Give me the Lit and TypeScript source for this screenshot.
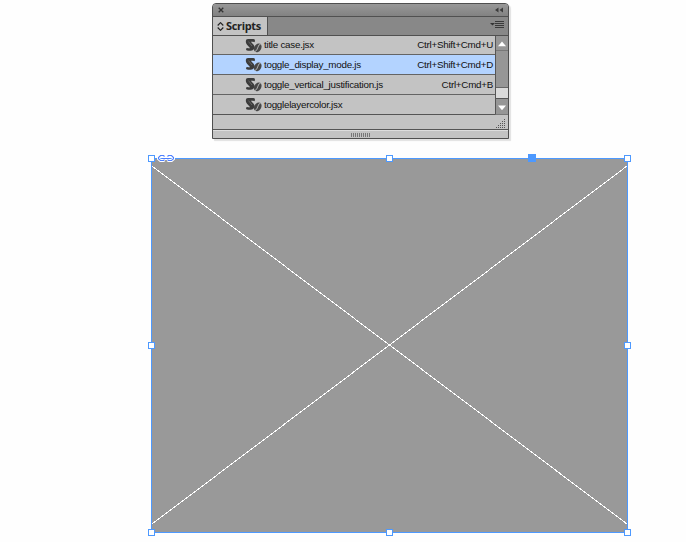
import { LitElement, html, css, svg } from "lit";
import { customElement } from "lit/decorators.js";

interface Script { name: string; keys: string; selected?: boolean; }

const scripts: Script[] = [
  { name: "title case.jsx", keys: "Ctrl+Shift+Cmd+U" },
  { name: "toggle_display_mode.js", keys: "Ctrl+Shift+Cmd+D", selected: true },
  { name: "toggle_vertical_justification.js", keys: "Ctrl+Cmd+B" },
  { name: "togglelayercolor.jsx", keys: "" },
];

const scriptIcon = html`<svg width="17" height="15" viewBox="0 0 17 15">
  <path d="M.8 3Q.8 1 3 1H8.500Q10.200 1.200 10 3T8.200 3.800H5.800L8.800 7Q10.200 9 9 11T5.500 12.800H3Q.8 12.600 1 11.200T3 10.200H5.200L2 6.800Q.6 5 .8 3Z" fill="#3c3c3c"/>
  <path d="M3.500 3.600L7 8" stroke="#777" stroke-width=".7" fill="none"/>
  <g transform="rotate(32 12.700 9.800)"><ellipse cx="12.700" cy="9.800" rx="3.500" ry="4.700" fill="#484848"/>
  <path d="M13.100 5Q11.900 7.500 12.700 9.800T12.400 14.600" stroke="#b4b4b4" stroke-width=".9" fill="none"/></g>
</svg>`;

@customElement("scripts-panel")
export class ScriptsPanel extends LitElement {
  static styles = css`
    :host { display: flex; flex-direction: column; box-sizing: border-box; width: 297px; height: 136px; border: 1px solid #4f4f4f; border-radius: 4px 4px 0 0; background: #c3c3c3; overflow: hidden; box-shadow: 2px 2px 1px #e2e2e2; font-family: "Liberation Sans", Arial, sans-serif; }
    svg { display: block; flex: none; }
    .title { height: 12px; flex: none; background: linear-gradient(#989898, #828282); border-bottom: 1px solid #505050; display: flex; justify-content: space-between; padding: 0 5px 0 5px; align-items: center; }
    .tabs { height: 18px; flex: none; display: flex; background: #888; border-bottom: 1px solid #505050; }
    .tab { width: 55px; box-sizing: border-box; background: #c3c3c3; border-right: 1px solid #505050; display: flex; align-items: center; padding: 0 0 2px 4px; gap: 2px; font: 700 11px "Open Sans", sans-serif; letter-spacing: -.35px; color: #222; }
    .tab svg { margin-top: 2px; }
    .menu { margin: 4px 4px 0 auto; }
    .main { height: 79px; flex: none; display: flex; }
    .list { flex: 1; border-bottom: 1px solid #555; }
    .row { height: 20px; box-sizing: border-box; border-bottom: 1px solid #646464; display: flex; align-items: center; padding: 0 2px 0 32px; font-size: 9.800px; letter-spacing: -.25px; color: #111; white-space: nowrap; }
    .row:first-child { height: 19px; }
    .row:first-child span { margin-top: -1px; }
    .row:last-child { border-bottom: 0; padding-bottom: 1px; }
    .row.selected { background: #b3d3ff; }
    .row svg { margin: 0 2px 0 0; }
    .row .keys { margin-left: auto; }
    .scroll { width: 13px; box-sizing: border-box; border-left: 1px solid #555; background: #969696; display: flex; flex-direction: column; border-bottom: 1px solid #777; }
    .fill { flex: 1; }
    .thumb { height: 12px; box-sizing: border-box; background: #dadada; border-top: 1px solid #666; border-bottom: 1px solid #555; }
    .foot { height: 15px; flex: none; box-sizing: border-box; border-bottom: 1px solid #555; display: flex; justify-content: flex-end; padding: 4px 2px 0 0; }
    .grip { flex: 1; display: flex; justify-content: center; align-items: center; border-top: 1px solid #ddd; }
  `;
  render() {
    return html`
      <div class="title">
        <svg width="6" height="6"><path d="M.7 .7L5.300 5.300M5.300 .7L.7 5.300" stroke="#333" stroke-width="1.300"/></svg>
        <svg width="8" height="6"><path d="M3.500 .5V5.500L0 3ZM8 .5V5.500L4.500 3Z" fill="#3c3c3c"/></svg>
      </div>
      <div class="tabs">
        <div class="tab"><svg width="7" height="9"><path d="M.7 3.500L3.500 .7 6.300 3.500M.7 5.500L3.500 8.300 6.300 5.500" fill="none" stroke="#222" stroke-width="1.200"/></svg><span>Scripts</span></div>
        <svg class="menu" width="14" height="8"><path d="M0 2H5L2.500 4.500Z" fill="#333"/><path d="M5 .5H14M5 2.500H14M5 4.500H14M5 6.500H14" stroke="#3a3a3a"/></svg>
      </div>
      <div class="main">
        <div class="list">${scripts.map((s) => html`<div class="row ${s.selected ? "selected" : ""}">${scriptIcon}<span>${s.name}</span><span class="keys">${s.keys}</span></div>`)}</div>
        <div class="scroll">
          <svg width="12" height="15"><path d="M2 10.200L6 5.500 10 10.200Z" fill="#fff"/><path d="M0 14.500H12" stroke="#777"/></svg>
          <div class="fill"></div><div class="thumb"></div>
          <svg width="12" height="15"><path d="M2 6.500L6 11.200 10 6.500Z" fill="#fff"/></svg>
        </div>
      </div>
      <div class="foot"><svg width="10" height="10">${[0, 1, 2, 3, 4].map((r) => Array.from({ length: r + 1 }, (_, c) => svg`<rect x=${8 - c * 2} y=${r * 2} width="1" height="1" fill="#555"/>`))}</svg></div>
      <div class="grip"><svg width="20" height="4"><path d="M0 2H20" stroke="#777" stroke-width="4" stroke-dasharray="1 1"/></svg></div>`;
  }
}

@customElement("image-frame")
export class ImageFrame extends LitElement {
  static styles = css`:host { display: block; } svg { display: block; }`;
  render() {
    const handles = [[0, 0], [238, 0], [476, 0], [0, 187], [476, 187], [0, 374], [238, 374], [476, 374]];
    const link = "M13.500 -1.500L12.500 -2.500H9.500L7.500 -.5V.8L9.500 2.500H12.500L13.500 1.800M16.500 -1.500L17.500 -2.500H20.500L22.500 -.5V.8L20.500 2.500H17.500L16.500 1.800M11 .5H19";
    return html`<svg width="484" height="382" viewBox="-4 -4 484 382" shape-rendering="crispEdges">
      <rect x=".5" y=".5" width="476" height="374" fill="#999" stroke="#4d99ff"/>
      <path d="M1 8L476 366M1 366L476 8" stroke="#fff"/>
      ${handles.map(([x, y]) => svg`<rect x=${x - 2.5} y=${y - 2.5} width="6" height="6" fill="#fff" stroke="#4d99ff"/>`)}
      <rect x="377" y="-4" width="8" height="8" fill="#4d99ff"/>
      <g shape-rendering="auto" fill="none"><path d=${link} stroke="#fff" stroke-width="3"/><path d=${link} stroke="#4d7fff" stroke-width="1.100"/></g>
    </svg>`;
  }
}

@customElement("app-root")
export class AppRoot extends LitElement {
  static styles = css`
    :host { display: block; box-sizing: border-box; width: 686px; height: 542px; background: #fefefe; padding-top: 3px; overflow: hidden; }
    scripts-panel { margin-left: 212px; }
    image-frame { margin: 15px 0 0 147px; }
  `;
  render() { return html`<scripts-panel></scripts-panel><image-frame></image-frame>`; }
}
